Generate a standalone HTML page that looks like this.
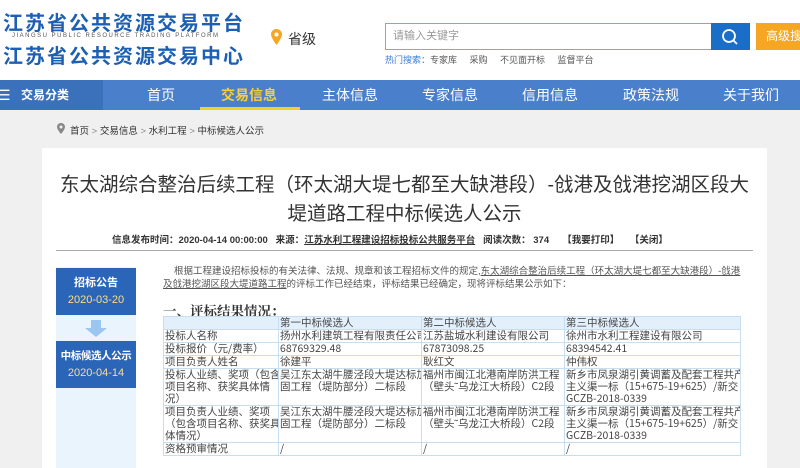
<!DOCTYPE html>
<html><head><meta charset="utf-8"><style>
*{margin:0;padding:0;box-sizing:border-box}
body{width:800px;height:468px;overflow:hidden;background:#f0f0f0;font-family:"Liberation Sans","Noto Sans CJK SC",sans-serif;position:relative}
.abs{position:absolute}
.hdr{left:0;top:0;width:800px;height:80px;background:#fff}
.logo{color:#1c5fb3;font-weight:bold;font-size:20px;letter-spacing:2px;white-space:nowrap}
.nav{left:0;top:80px;width:800px;height:30px;background:#4a80cb}
.nav span{position:absolute;top:0;line-height:30px;color:#fff;font-size:14px;transform:translateX(-50%);white-space:nowrap}
.panel{left:42px;top:148px;width:725px;height:320px;background:#fff}
table{position:absolute;left:163px;top:316px;width:577px;border-collapse:collapse;font-family:"Noto Sans CJK SC",sans-serif;font-size:10.5px;color:#444;table-layout:fixed}
td{border:1px solid #c6def0;padding:0 1px;line-height:12px;vertical-align:top;overflow:hidden;white-space:nowrap}
.box{left:56px;width:80px;height:47px;background:#2b65b8;color:#fff;text-align:center;font-size:11px;padding-top:7px;line-height:17px;white-space:nowrap}
</style></head><body>
<div class="abs hdr"></div>
<div class="abs logo" style="left:3px;top:7px">江苏省公共资源交易平台</div>
<div class="abs" style="left:12px;top:33px;font-size:6px;letter-spacing:1.5px;color:#555;white-space:nowrap">JIANGSU PUBLIC RESOURCE TRADING PLATFORM</div>
<div class="abs logo" style="left:3px;top:40px">江苏省公共资源交易中心</div>
<svg class="abs" style="left:271px;top:29px" width="11" height="16" viewBox="0 0 11 16"><path d="M5.5 0C2.5 0 0 2.4 0 5.4 0 9 5.5 16 5.5 16S11 9 11 5.4C11 2.4 8.5 0 5.5 0z" fill="#f5a623"/><circle cx="5.5" cy="5.5" r="2" fill="#fff"/></svg>
<div class="abs" style="left:288px;top:29px;font-size:14px;color:#333">省级</div>
<div class="abs" style="left:385px;top:23px;width:327px;height:27px;border:1px solid #7ba9dc;background:#fff;font-size:11px;color:#999;line-height:25px;padding-left:7px">请输入关键字</div>
<div class="abs" style="left:711px;top:23px;width:39px;height:27px;background:#1a6ec8"></div>
<svg class="abs" style="left:721px;top:28px" width="18" height="18" viewBox="0 0 18 18"><circle cx="8" cy="8" r="6" fill="none" stroke="#fff" stroke-width="1.8"/><path d="M12.5 12.5L16 16" stroke="#fff" stroke-width="1.8"/></svg>
<div class="abs" style="left:756px;top:23px;width:44px;height:27px;background:#f6a623;color:#fff;font-size:12px;line-height:27px;padding-left:10px;white-space:nowrap;overflow:hidden">高级搜</div>
<div class="abs" style="left:385px;top:53px;font-size:9px;color:#555;white-space:nowrap"><span style="color:#3a7bd5">热门搜索：</span>专家库&nbsp;&nbsp;&nbsp;&nbsp;&nbsp;采购&nbsp;&nbsp;&nbsp;&nbsp;&nbsp;不见面开标&nbsp;&nbsp;&nbsp;&nbsp;&nbsp;监督平台</div>
<div class="abs nav"></div>
<div class="abs" style="left:0;top:80px;width:103px;height:30px;background:#3b70bb"></div>
<div class="abs" style="left:200px;top:107px;width:100px;height:3px;background:#f5d020"></div>
<div class="abs" style="left:0;top:80px;width:800px;height:30px">
<span style="position:absolute;left:-2px;top:0;line-height:30px;color:#fff;font-size:14px">☰</span>
<span style="position:absolute;left:21px;top:0;line-height:30px;color:#fff;font-size:12px;font-weight:bold">交易分类</span>
</div>
<div class="abs nav" style="background:none">
<span style="left:161px">首页</span><span style="left:249px;color:#f6cf3a;font-weight:bold">交易信息</span><span style="left:350px">主体信息</span><span style="left:450px">专家信息</span><span style="left:550px">信用信息</span><span style="left:651px">政策法规</span><span style="left:751px">关于我们</span>
</div>
<svg class="abs" style="left:57px;top:123px" width="8" height="11" viewBox="0 0 8 11"><path d="M4 0C1.8 0 0 1.7 0 3.9 0 6.5 4 11 4 11S8 6.5 8 3.9C8 1.7 6.2 0 4 0z" fill="#888"/><circle cx="4" cy="4" r="1.5" fill="#f0f0f0"/></svg>
<div class="abs" style="left:70px;top:123px;font-size:9.5px;color:#333;white-space:nowrap">首页 <span style="color:#888">&gt;</span> 交易信息 <span style="color:#888">&gt;</span> 水利工程 <span style="color:#888">&gt;</span> 中标候选人公示</div>
<div class="abs panel"></div>
<div class="abs" style="left:42px;top:171px;width:725px;text-align:center;font-size:19.5px;color:#333;line-height:29px;white-space:nowrap">东太湖综合整治后续工程（环太湖大堤七都至大缺港段）-戗港及戗港挖湖区段大<br>堤道路工程中标候选人公示</div>
<div class="abs" style="left:112px;top:232px;font-size:9.5px;font-weight:bold;color:#333;white-space:nowrap">信息发布时间：2020-04-14 00:00:00&nbsp;&nbsp;&nbsp;来源：<u>江苏水利工程建设招标投标公共服务平台</u>&nbsp;&nbsp;&nbsp;阅读次数：&nbsp;374&nbsp;&nbsp;&nbsp;&nbsp;&nbsp;【我要打印】&nbsp;&nbsp;&nbsp;&nbsp;【关闭】</div>
<div class="abs" style="left:56px;top:250px;width:697px;height:1px;background:#aaa"></div>
<div class="abs" style="left:56px;top:267px;width:80px;height:201px;background:#e9f4fd"></div>
<div class="abs box" style="top:268px"><b style="font-size:11px">招标公告</b><br><span style="color:#f5e08a;font-size:11px">2020-03-20</span></div>
<svg class="abs" style="left:85px;top:320px" width="22" height="17" viewBox="0 0 22 17"><path d="M6 0h10v8h6L11 17 0 8h6z" fill="#9cc6f2"/></svg>
<div class="abs box" style="top:341px"><b style="font-size:10.5px;letter-spacing:-0.4px">中标候选人公示</b><br><span style="color:#f5e08a;font-size:11px">2020-04-14</span></div>
<div class="abs" style="left:163px;top:265px;width:580px;font-size:9.5px;color:#555;line-height:13px;text-indent:11px">根据工程建设招标投标的有关法律、法规、规章和该工程招标文件的规定,<u>东太湖综合整治后续工程（环太湖大堤七都至大缺港段）-戗港及戗港挖湖区段大堤道路工程</u>的评标工作已经结束，评标结果已经确定，现将评标结果公示如下：</div>
<div class="abs" style="left:163px;top:300px;font-size:13.5px;font-weight:bold;color:#333;font-family:'Noto Serif CJK SC',serif">一、评标结果情况：</div>
<table>
<colgroup><col style="width:115px"><col style="width:143px"><col style="width:143px"><col style="width:176px"></colgroup>
<tr style="background:#e3f0fb;height:12px"><td></td><td>第一中标候选人</td><td>第二中标候选人</td><td>第三中标候选人</td></tr>
<tr style="height:13px"><td>投标人名称</td><td>扬州水利建筑工程有限责任公司</td><td>江苏盐城水利建设有限公司</td><td>徐州市水利工程建设有限公司</td></tr>
<tr style="height:12px"><td>投标报价（元/费率）</td><td>68769329.48</td><td>67873098.25</td><td>68394542.41</td></tr>
<tr style="height:13px"><td>项目负责人姓名</td><td>徐建平</td><td>耿红文</td><td>仲伟权</td></tr>
<tr style="height:36px"><td>投标人业绩、奖项（包含<br>项目名称、获奖具体情<br>况）</td><td>吴江东太湖牛腰泾段大堤达标加<br>固工程（堤防部分）二标段</td><td>福州市闽江北港南岸防洪工程<br>（壁头˜乌龙江大桥段）C2段</td><td>新乡市凤泉湖引黄调蓄及配套工程共产<br>主义渠一标（15+675-19+625）/新交<br>GCZB-2018-0339</td></tr>
<tr style="height:36px"><td>项目负责人业绩、奖项<br>（包含项目名称、获奖具<br>体情况）</td><td>吴江东太湖牛腰泾段大堤达标加<br>固工程（堤防部分）二标段</td><td>福州市闽江北港南岸防洪工程<br>（壁头˜乌龙江大桥段）C2段</td><td>新乡市凤泉湖引黄调蓄及配套工程共产<br>主义渠一标（15+675-19+625）/新交<br>GCZB-2018-0339</td></tr>
<tr style="height:13px"><td>资格预审情况</td><td>/</td><td>/</td><td>/</td></tr>
</table>
</body></html>
